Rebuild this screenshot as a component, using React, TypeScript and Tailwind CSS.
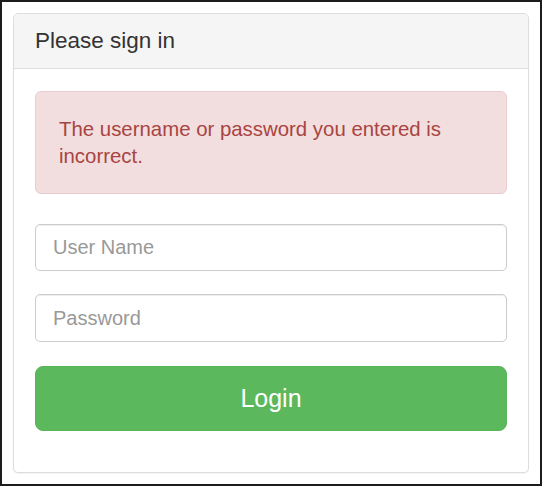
import React from 'react';

const App: React.FC = () => {
  return (
    <div className="w-[544px] h-[488px] bg-white" style={{ fontFamily: '"Liberation Sans", Arial, sans-serif' }}>
      <div className="w-[542px] h-[486px] border-2 border-[#1c1c1c] p-[11px]">
        <div className="h-full flex flex-col border border-[#dddddd] rounded-[5px] bg-white shadow-[0_1px_1px_rgba(0,0,0,0.05)] overflow-hidden">
          {/* Heading */}
          <div className="h-[55px] shrink-0 flex items-center px-[21px] bg-[#f5f5f5] border-b border-[#dddddd]">
            <h3 className="text-[22.5px] leading-none text-[#333333] pt-[1px]">Please sign in</h3>
          </div>

          {/* Body */}
          <div className="flex flex-col px-[21px] pt-[22px]">
            <div className="mb-[30px] rounded-[6px] border border-[#ebccd1] bg-[#f2dede] px-[23px] pt-[24px] pb-[23px] text-[20.4px] leading-[27px] text-[#a94442]">
              The username or password you entered is incorrect.
            </div>

            <input
              type="text"
              placeholder="User Name"
              className="mb-[23px] h-[47px] w-full rounded-[5px] border border-[#cccccc] bg-white pl-[17px] text-[20px] text-[#555555] placeholder:text-[#999999] shadow-[inset_0_1px_1px_rgba(0,0,0,0.075)] outline-none"
            />
            <input
              type="password"
              placeholder="Password"
              className="mb-[24px] h-[48px] w-full rounded-[5px] border border-[#cccccc] bg-white pl-[17px] text-[20px] text-[#555555] placeholder:text-[#999999] shadow-[inset_0_1px_1px_rgba(0,0,0,0.075)] outline-none"
            />

            <button
              type="button"
              className="h-[65px] w-full rounded-[8px] border border-[#57b557] bg-[#5cb85c] text-[25px] text-white"
            >
              Login
            </button>
          </div>
        </div>
      </div>
    </div>
  );
};

export default App;
